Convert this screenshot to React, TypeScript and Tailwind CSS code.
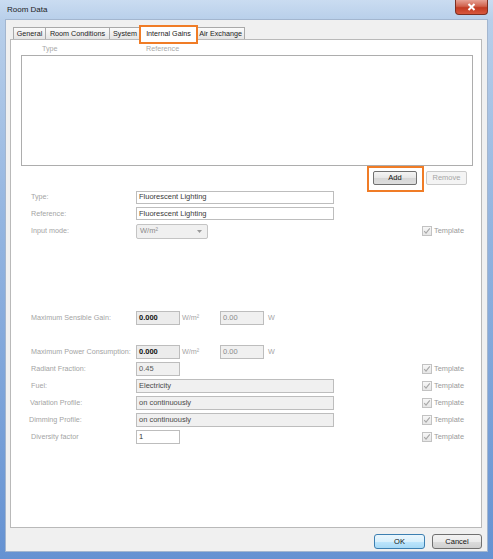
import React from "react";

function Check() {
  return (
    <span className="w-[10px] h-[10px] border border-[#c2c2c2] bg-[linear-gradient(180deg,#f7f7f7,#e6e6e6)] flex items-center justify-center">
      <svg width="8" height="8" viewBox="0 0 8 8">
        <path d="M1.2 4.2 L3 6.2 L6.8 1.3" fill="none" stroke="#a8a8a8" strokeWidth="1.1" />
      </svg>
    </span>
  );
}

function Template() {
  return (
    <div className="w-[59px] flex items-center gap-[2px]">
      <Check />
      <span className="text-[7.4px] text-[#9a9a9a] leading-none">Template</span>
    </div>
  );
}

function Label({ text, shift = "" }: { text: string; shift?: string }) {
  return (
    <div className="w-[125px] pl-[20px] text-[7.2px] text-[#a4a4a4] leading-none">
      <span className={`relative ${shift}`}>{text}</span>
    </div>
  );
}

function Box({
  value,
  w,
  h = "h-[13px]",
  bg = "bg-[#f0f0f0]",
  tone = "text-[#3a3a3a]",
}: {
  value: string;
  w: string;
  h?: string;
  bg?: string;
  tone?: string;
}) {
  return (
    <div className={`${w} ${h} ${bg} ${tone} border border-[#bdbdbd] flex items-center pl-[2px] text-[7.5px] leading-none`}>
      {value}
    </div>
  );
}

const tabBase =
  "h-[12px] border-t border-l border-r border-[#a9a9a9] bg-[linear-gradient(180deg,#fbfbfb,#e4e4e4)] flex items-center justify-center text-[7.2px] text-[#222] leading-none -mr-px";

export default function App() {
  return (
    <div className="w-[493px] h-[559px] flex flex-col overflow-hidden font-['Liberation_Sans',Arial,sans-serif] bg-[linear-gradient(180deg,#cadcf1_0px,#b8cfea_20px,#94b5e0_220px,#6592d2_559px)]">
      {/* title bar */}
      <div className="relative h-[19px] flex items-center pl-[7px]">
        <span className="text-[8px] text-[#1c1c1c] leading-none">Room Data</span>
        <div className="absolute right-[5px] top-0 w-[33px] h-[15px] rounded-b-[4px] border border-t-0 border-[#7d2f22] bg-[linear-gradient(180deg,#e7a194_0%,#d0624d_45%,#c23a22_55%,#d8583e_100%)] flex items-center justify-center">
          <svg width="9" height="8" viewBox="0 0 9 8">
            <path d="M1.5 1 L7.5 7 M7.5 1 L1.5 7" stroke="#ffffff" strokeWidth="2" />
          </svg>
        </div>
      </div>

      {/* client area */}
      <div className="mx-[5px] mb-[7px] flex-1 bg-[#f0f0f0] border border-[#a3b6cf] flex flex-col pl-[4px] pr-[5px] pt-[6px]">
        {/* tab strip */}
        <div className="h-[13px] flex items-end pl-[3px] relative z-10">
          <div className={`${tabBase} w-[33px]`}>General</div>
          <div className={`${tabBase} w-[65px]`}>Room Conditions</div>
          <div className={`${tabBase} w-[32px]`}>System</div>
          <div className="relative h-[14px] w-[57px] -mb-px -mr-px border-t border-l border-r border-[#a9a9a9] bg-white flex items-center justify-center text-[7.2px] text-[#222] leading-none">
            Internal Gains
            <div className="absolute -left-[2px] -top-[2px] w-[59px] h-[19px] border-2 border-[#f07c26]" />
          </div>
          <div className={`${tabBase} w-[49px]`}>Air Exchange</div>
        </div>

        {/* tab page */}
        <div className="h-[489px] bg-white border border-[#b9b9b9] flex flex-col">
          <div className="h-[15px] pt-[3px] flex items-center text-[7.2px] text-[#a9a9a9] leading-none">
            <span className="ml-[31px] w-[104px]">Type</span>
            <span>Reference</span>
          </div>
          <div className="ml-[10px] w-[452px] h-[111px] border border-[#adadad] bg-white" />

          <div className="mt-[5px] h-[14px] flex justify-end pr-[14px] gap-[9px]">
            <div className="relative w-[44px] h-[14px] rounded-[2px] border border-[#707070] bg-[linear-gradient(180deg,#f5f5f5,#e6e6e6_50%,#d6d6d6_51%,#dedede)] flex items-center justify-center text-[7.5px] text-[#111] leading-none">
              Add
              <div className="absolute -left-[7px] -top-[6px] w-[57px] h-[26px] border-2 border-[#f07c26]" />
            </div>
            <div className="w-[41px] h-[14px] rounded-[2px] border border-[#cacaca] bg-[#f4f4f4] flex items-center justify-center text-[7.5px] text-[#a6a6a6] leading-none">
              Remove
            </div>
          </div>

          <div className="mt-[4px] flex flex-col">
            <div className="h-[16px] flex items-center">
              <Label text="Type:" />
              <Box value="Fluorescent Lighting" w="w-[198px]" bg="bg-white" />
            </div>
            <div className="h-[17px] flex items-center">
              <Label text="Reference:" />
              <Box value="Fluorescent Lighting" w="w-[198px]" bg="bg-white" />
            </div>
            <div className="h-[18px] flex items-center">
              <Label text="Input mode:" />
              <div className="w-[72px] h-[15px] rounded-[2px] border border-[#c4c4c4] bg-[#f0f0f0] flex items-center pl-[3px] text-[7.5px] text-[#8a8a8a] leading-none">
                <span className="flex-1">W/m²</span>
                <svg width="5" height="3" viewBox="0 0 5 3" className="mr-[5px]">
                  <path d="M0 0 L5 0 L2.5 3 Z" fill="#9a9a9a" />
                </svg>
              </div>
              <div className="flex-1" />
              <Template />
            </div>

            <div className="h-[69px]" />

            <div className="h-[17px] flex items-center">
              <Label text="Maximum Sensible Gain:" />
              <Box value="0.000" w="w-[44px]" h="h-[14px]" bg="bg-[#ececec]" tone="text-[#111] font-bold" />
              <span className="w-[40px] pl-[2px] text-[7.2px] text-[#a4a4a4] leading-none">W/m²</span>
              <Box value="0.00" w="w-[44px]" h="h-[14px]" tone="text-[#8c8c8c]" />
              <span className="pl-[4px] text-[7.2px] text-[#a4a4a4] leading-none">W</span>
            </div>

            <div className="h-[17px]" />

            <div className="h-[17px] flex items-center">
              <Label text="Maximum Power Consumption:" />
              <Box value="0.000" w="w-[44px]" h="h-[14px]" bg="bg-[#ececec]" tone="text-[#111] font-bold" />
              <span className="w-[40px] pl-[2px] text-[7.2px] text-[#a4a4a4] leading-none">W/m²</span>
              <Box value="0.00" w="w-[44px]" h="h-[14px]" tone="text-[#8c8c8c]" />
              <span className="pl-[4px] text-[7.2px] text-[#a4a4a4] leading-none">W</span>
            </div>
            <div className="h-[17px] flex items-center">
              <Label text="Radiant Fraction:" />
              <Box value="0.45" w="w-[44px]" h="h-[14px]" tone="text-[#5a5a5a]" />
              <div className="flex-1" />
              <Template />
            </div>
            <div className="h-[17px] flex items-center">
              <Label text="Fuel:" />
              <Box value="Electricity" w="w-[198px]" h="h-[14px]" tone="text-[#4a4a4a]" />
              <div className="flex-1" />
              <Template />
            </div>
            <div className="h-[17px] flex items-center">
              <Label text="Variation Profile:" shift="-left-px" />
              <Box value="on continuously" w="w-[198px]" h="h-[14px]" tone="text-[#4a4a4a]" />
              <div className="flex-1" />
              <Template />
            </div>
            <div className="h-[17px] flex items-center">
              <Label text="Dimming Profile:" shift="-left-[2px]" />
              <Box value="on continuously" w="w-[198px]" h="h-[14px]" tone="text-[#4a4a4a]" />
              <div className="flex-1" />
              <Template />
            </div>
            <div className="h-[17px] flex items-center">
              <Label text="Diversity factor" />
              <Box value="1" w="w-[44px]" h="h-[14px]" bg="bg-white" tone="text-[#333]" />
              <div className="flex-1" />
              <Template />
            </div>
          </div>
        </div>

        {/* dialog buttons */}
        <div className="mt-[6px] h-[15px] flex justify-end gap-[7px]">
          <div className="w-[51px] h-[15px] rounded-[3px] border border-[#3c7fb1] bg-[linear-gradient(180deg,#eaf6fd,#d9f0fc_50%,#bee6fd_51%,#a7d9f5)] flex items-center justify-center text-[7.5px] text-[#111] leading-none">
            OK
          </div>
          <div className="w-[50px] h-[15px] rounded-[3px] border border-[#707070] bg-[linear-gradient(180deg,#f2f2f2,#ebebeb_50%,#dddddd_51%,#cfcfcf)] flex items-center justify-center text-[7.5px] text-[#111] leading-none">
            Cancel
          </div>
        </div>
      </div>
    </div>
  );
}
